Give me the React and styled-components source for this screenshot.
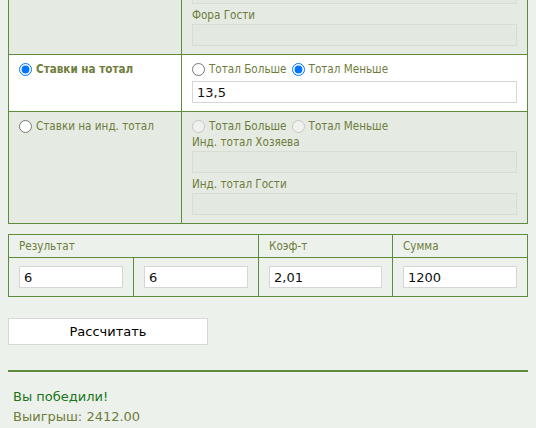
import React from "react";
import styled, { createGlobalStyle } from "styled-components";

const GREEN = "#5f8b3d";
const OLIVE = "#6f7d3c";
const PAGE_BG = "#ecf1eb";
const MUTED_BG = "#e5eae3";

const Global = createGlobalStyle`
  html, body { margin: 0; padding: 0; background: ${PAGE_BG}; }
  body { padding: 0 8px 8px; overflow: hidden; }
`;

const Page = styled.div`
  margin-top: -25px;
  font-family: "DejaVu Sans Condensed", "DejaVu Sans", Verdana, sans-serif;
  font-size: 11.6px;
  color: ${OLIVE};
`;

const BetGrid = styled.div`
  display: grid;
  grid-template-columns: 172px 1fr;
  gap: 1px;
  background: ${GREEN};
  border: 1px solid ${GREEN};
`;

const Cell = styled.div`
  background: ${(p) => (p.$active ? "#ffffff" : MUTED_BG)};
  padding: 6px 10px 8px;
  display: flex;
  flex-direction: column;
`;

const RadioLine = styled.div`
  display: flex;
  align-items: center;
  height: 16px;
`;

const Option = styled.label`
  display: inline-flex;
  align-items: center;
  gap: 4px;
  margin-right: 5px;
  font-weight: ${(p) => (p.$bold ? 700 : 400)};
  white-space: nowrap;
`;

const Radio = styled.input.attrs({ type: "radio" })`
  margin: 0;
  width: 13px;
  height: 13px;
  flex: none;
`;

const FieldLabel = styled.div`
  height: 16px;
  line-height: 16px;
  margin-top: ${(p) => p.$mt || 0}px;
`;

const TextInput = styled.input.attrs({ type: "text" })`
  box-sizing: border-box;
  display: block;
  width: 100%;
  height: 22px;
  margin: ${(p) => p.$mt || 0}px 0 0;
  padding: 0 4px;
  border: 1px solid ${(p) => (p.disabled ? "#d7dcd5" : "#d6d6d6")};
  background: ${(p) => (p.disabled ? "#e3e8e1" : "#ffffff")};
  font-family: "DejaVu Sans", Verdana, sans-serif;
  font-size: 13px;
  color: #111;
  outline: none;
`;

const CalcGrid = styled.div`
  margin-top: 10px;
  display: grid;
  grid-template-columns: 124px 124px 133px 1fr;
  gap: 1px;
  background: ${GREEN};
  border: 1px solid ${GREEN};
`;

const HeadCell = styled.div`
  grid-column: span ${(p) => p.$span || 1};
  background: ${PAGE_BG};
  height: 22px;
  padding: 0 10px;
  display: flex;
  align-items: center;
`;

const InputCell = styled.div`
  background: ${PAGE_BG};
  padding: 8px 10px;
`;

const CalcButton = styled.button`
  display: block;
  margin-top: 21px;
  width: 200px;
  height: 27px;
  background: #ffffff;
  border: 1px solid #d8d8d8;
  font-family: "DejaVu Sans", Verdana, sans-serif;
  font-size: 13px;
  color: #000;
  padding: 0;
`;

const Divider = styled.div`
  margin-top: 25px;
  height: 2px;
  background: ${GREEN};
`;

const Result = styled.div`
  margin-top: 15px;
  padding-left: 5px;
  font-family: "DejaVu Sans", Verdana, sans-serif;
  font-size: 13px;
  line-height: 20px;
`;

const ResultLine = styled.div`
  color: ${(p) => (p.$win ? "#1a741a" : OLIVE)};
`;

export default function App() {
  return (
    <>
      <Global />
      <Page>
        <BetGrid>
          <Cell />
          <Cell>
            <TextInput disabled />
            <FieldLabel $mt={3}>Фора Гости</FieldLabel>
            <TextInput disabled $mt={1} />
          </Cell>

          <Cell $active>
            <RadioLine>
              <Option $bold>
                <Radio name="bet" defaultChecked />
                Ставки на тотал
              </Option>
            </RadioLine>
          </Cell>
          <Cell $active>
            <RadioLine>
              <Option>
                <Radio name="total" />
                Тотал Больше
              </Option>
              <Option>
                <Radio name="total" defaultChecked />
                Тотал Меньше
              </Option>
            </RadioLine>
            <TextInput defaultValue="13,5" $mt={4} />
          </Cell>

          <Cell>
            <RadioLine>
              <Option>
                <Radio name="bet" />
                Ставки на инд. тотал
              </Option>
            </RadioLine>
          </Cell>
          <Cell>
            <RadioLine>
              <Option>
                <Radio name="ind" disabled />
                Тотал Больше
              </Option>
              <Option>
                <Radio name="ind" disabled />
                Тотал Меньше
              </Option>
            </RadioLine>
            <FieldLabel>Инд. тотал Хозяева</FieldLabel>
            <TextInput disabled $mt={1} />
            <FieldLabel $mt={3}>Инд. тотал Гости</FieldLabel>
            <TextInput disabled $mt={1} />
          </Cell>
        </BetGrid>

        <CalcGrid>
          <HeadCell $span={2}>Результат</HeadCell>
          <HeadCell>Коэф-т</HeadCell>
          <HeadCell>Сумма</HeadCell>
          <InputCell>
            <TextInput defaultValue="6" />
          </InputCell>
          <InputCell>
            <TextInput defaultValue="6" />
          </InputCell>
          <InputCell>
            <TextInput defaultValue="2,01" />
          </InputCell>
          <InputCell>
            <TextInput defaultValue="1200" />
          </InputCell>
        </CalcGrid>

        <CalcButton type="button">Рассчитать</CalcButton>

        <Divider />

        <Result>
          <ResultLine $win>Вы победили!</ResultLine>
          <ResultLine>Выигрыш: 2412.00</ResultLine>
        </Result>
      </Page>
    </>
  );
}
